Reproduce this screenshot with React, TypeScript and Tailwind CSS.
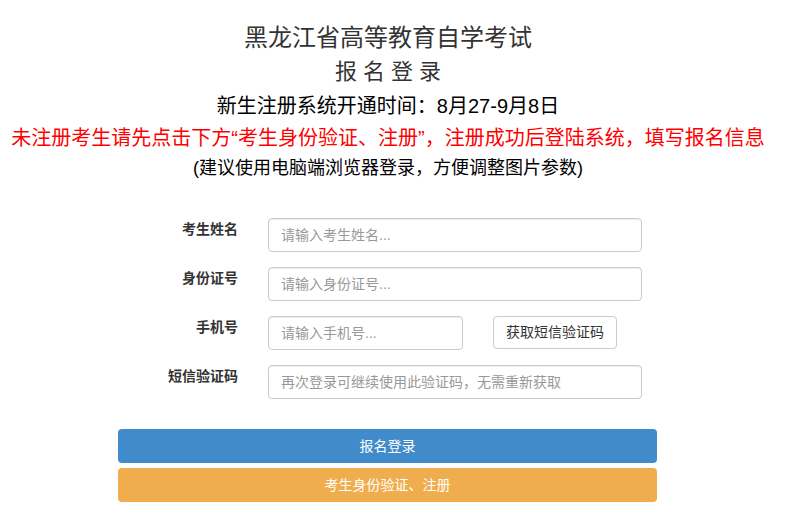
import React from "react";

const font = "font-['Liberation_Sans','Noto_Sans_CJK_SC',sans-serif]";

function Row({ label, children }: { label: string; children: React.ReactNode }) {
  return (
    <div className="flex items-start gap-[30px]">
      <div className="w-[120px] shrink-0 text-right text-[14px] font-bold leading-[20px] pt-[1px] text-[#333]">
        {label}
      </div>
      {children}
    </div>
  );
}

function Input({ placeholder, w }: { placeholder: string; w: string }) {
  return (
    <input
      placeholder={placeholder}
      className={`${w} h-[34px] rounded-[4px] border border-[#ccc] bg-white px-[12px] text-[14px] text-[#555] shadow-[inset_0_1px_1px_rgba(0,0,0,0.075)] outline-none placeholder:text-[#999] ${font}`}
    />
  );
}

export default function App() {
  return (
    <div className={`min-h-[523px] w-full bg-white ${font}`}>
      <div className="flex w-[776px] flex-col items-center pt-[21px] text-[#333]">
        <div className="text-[24px] leading-[34px]">黑龙江省高等教育自学考试</div>
        <div className="text-[22px] leading-[34px] tracking-[6px] pl-[6px]">报名登录</div>
        <div className="text-[20px] leading-[34px] text-black">新生注册系统开通时间：8月27-9月8日</div>
        <div className="text-[20px] leading-[30px] text-[#ff0000] whitespace-nowrap">
          未注册考生请先点击下方“考生身份验证、注册”，注册成功后登陆系统，填写报名信息
        </div>
        <div className="text-[18px] leading-[30px] text-black">(建议使用电脑端浏览器登录，方便调整图片参数)</div>
      </div>

      <div className="mx-auto mt-[35px] w-[555px]">
        <div className="flex flex-col gap-[15px]">
          <Row label="考生姓名">
            <Input placeholder="请输入考生姓名..." w="w-[374px]" />
          </Row>
          <Row label="身份证号">
            <Input placeholder="请输入身份证号..." w="w-[374px]" />
          </Row>
          <Row label="手机号">
            <div className="flex gap-[30px]">
              <Input placeholder="请输入手机号..." w="w-[195px]" />
              <button className="h-[33px] w-[124px] rounded-[4px] border border-[#ccc] bg-white text-[14px] text-[#333]">
                获取短信验证码
              </button>
            </div>
          </Row>
          <Row label="短信验证码">
            <Input placeholder="再次登录可继续使用此验证码，无需重新获取" w="w-[374px]" />
          </Row>
        </div>

        <div className="mt-[30px] flex flex-col gap-[5px]">
          <button className="h-[34px] w-[539px] rounded-[4px] bg-[#428bca] text-[14px] text-white">报名登录</button>
          <button className="h-[34px] w-[539px] rounded-[4px] bg-[#f0ad4e] text-[14px] text-white">考生身份验证、注册</button>
        </div>
      </div>
    </div>
  );
}
